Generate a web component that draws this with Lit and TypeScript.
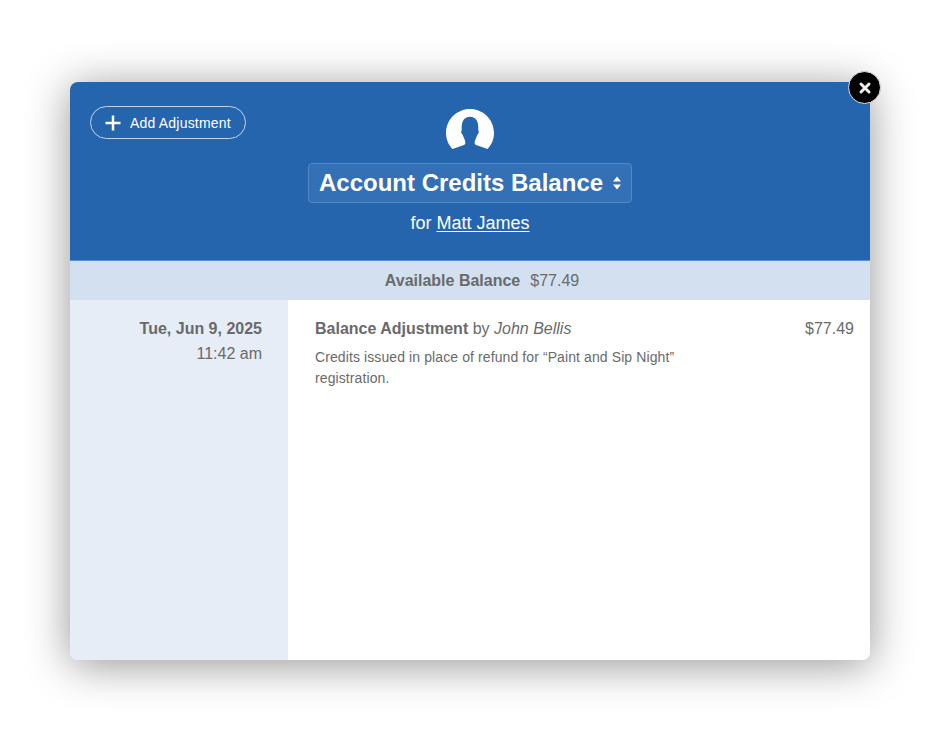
import { LitElement, html, css } from "lit";
import { customElement } from "lit/decorators.js";

@customElement("app-root")
export class AppRoot extends LitElement {
  static styles = css`
    :host { display: block; background: #fff; height: 731px; box-sizing: border-box; padding: 82px 82px 71px 70px; font-family: "Liberation Sans", Arial, sans-serif; color: #6a6a6a; overflow: hidden; }
    .modal { position: relative; width: 800px; height: 578px; border-radius: 8px; box-shadow: 0 5px 44px rgba(0,0,0,.42); display: flex; flex-direction: column; background: #fff; }
    .header { position: relative; height: 179px; flex: none; box-sizing: border-box; background: #2565ae; border-bottom: 1px solid #5b8ed0; border-radius: 8px 8px 0 0; display: flex; flex-direction: column; align-items: center; padding-top: 27px; color: #fff; }
    .add { position: absolute; left: 20px; top: 24px; box-sizing: border-box; width: 156px; height: 33px; border: 1.3px solid #c3d5ea; border-radius: 17px; display: flex; align-items: center; padding-left: 14px; gap: 9px; font-size: 14px; letter-spacing: .2px; color: #fff; }
    .add svg { display: block; }
    .avatar { display: block; }
    .select { margin-top: 13px; box-sizing: border-box; width: 324px; height: 40px; border: 1px solid #5587c3; border-radius: 4px; background: #3370b5; display: flex; align-items: center; padding-left: 10px; gap: 9px; font-size: 24px; font-weight: 700; color: #fff; white-space: nowrap; }
    .for { margin-top: 10px; font-size: 18px; line-height: 21px; }
    .for span { text-decoration: underline; text-underline-offset: 2px; text-decoration-thickness: 1px; }
    .bar { height: 39px; flex: none; box-sizing: border-box; padding: 1px 0 0 24px; background: #d2e0f0; display: flex; justify-content: center; align-items: center; gap: 10px; font-size: 16px; }
    .bar b { font-weight: 700; }
    .body { flex: 1; display: flex; min-height: 0; }
    .side { width: 218px; flex: none; box-sizing: border-box; background: #e6edf6; border-radius: 0 0 0 8px; padding: 19px 26px 0 0; text-align: right; font-size: 16px; line-height: 19px; }
    .side div + div { margin-top: 6px; }
    .main { flex: 1; padding: 19px 16px 0 27px; background: #fff; border-radius: 0 0 8px 0; }
    .row { display: flex; justify-content: space-between; font-size: 16px; line-height: 19px; }
    .note { margin-top: 9px; font-size: 14px; line-height: 21px; letter-spacing: .1px; width: 380px; }
    .close { position: absolute; left: 778px; top: -11px; width: 33px; height: 33px; box-sizing: border-box; border-radius: 50%; background: #000; border: 1.5px solid #ddd; display: flex; align-items: center; justify-content: center; }
    .close svg { display: block; }
  `;

  render() {
    return html`
      <div class="modal">
        <div class="header">
          <div class="add">
            <svg width="16" height="16" viewBox="0 0 16 16"><path d="M8 .5v15M.5 8h15" stroke="#fff" stroke-width="2.5" fill="none"/></svg>
            <span>Add Adjustment</span>
          </div>
          <svg class="avatar" width="48" height="41" viewBox="0 0 48 41">
            <path fill="#fff" d="M24 0C10.700 0 0 10.700 0 24c0 6.100 2.400 11.700 6.400 16l11.600-4c1.200-.5 1.500-1.800 1.300-3.300-.3-2-1.800-4.200-2.800-7.200-.8-.4-1.300-1.500-1.300-2.700 0-.8.2-1.500.6-2C15 12.800 18 7.700 24 7.700s9 5.100 8.200 13.100c.4.500.6 1.200.6 2 0 1.200-.5 2.300-1.300 2.700-1 3-2.500 5.200-2.800 7.200-.2 1.500.1 2.800 1.300 3.300l11.600 4c4-4.300 6.400-9.900 6.400-16C48 10.700 37.300 0 24 0z"/>
          </svg>
          <div class="select">
            <span>Account Credits Balance</span>
            <svg width="10" height="16" viewBox="0 0 10 16"><path fill="#fff" d="M5 1.500 9 6.500H1zM5 14.500 1 9.500h8z"/></svg>
          </div>
          <div class="for">for <span>Matt James</span></div>
        </div>
        <div class="bar"><b>Available Balance</b><span>$77.49</span></div>
        <div class="body">
          <div class="side">
            <div><b>Tue, Jun 9, 2025</b></div>
            <div>11:42 am</div>
          </div>
          <div class="main">
            <div class="row">
              <div><b>Balance Adjustment</b> by <i>John Bellis</i></div>
              <div>$77.49</div>
            </div>
            <div class="note">Credits issued in place of refund for “Paint and Sip Night” registration.</div>
          </div>
        </div>
        <div class="close">
          <svg width="14" height="14" viewBox="0 0 14 14"><path d="M3 3l8 8M11 3 3 11" stroke="#eee" stroke-width="3" stroke-linecap="round" fill="none"/></svg>
        </div>
      </div>
    `;
  }
}
